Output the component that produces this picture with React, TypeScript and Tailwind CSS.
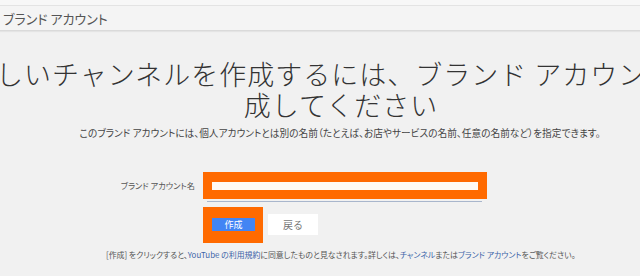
import React from "react";

const jp = "font-['Noto_Sans_CJK_JP','Noto_Sans',sans-serif]";
const palt = "[font-feature-settings:'palt']";

export default function App() {
  return (
    <div className={`w-[640px] h-[276px] overflow-hidden bg-[#f1f1f1] ${jp}`}>
      <div className="h-[6px] bg-[#f7f7f7] border-b border-[#e3e3e3]" />
      <div className={`h-[25px] bg-[#f4f4f4] border-b border-[#dadada] shadow-[0_1px_1px_rgba(0,0,0,0.05)] flex items-center px-[3px] ${palt}`}>
        <span className="text-[13px] text-[#555] leading-none">ブランド アカウント</span>
      </div>
      <div className="mt-[27px] text-[27px] leading-[31px] font-light text-[#333] whitespace-nowrap tracking-[1px]">
        <div className="w-[760px] ml-[-32px] text-center">
          新しいチャンネルを作成するには、ブランド アカウントを作
        </div>
        <div className="w-[760px] ml-[-39px] text-center">成してください</div>
      </div>
      <div className={`w-[760px] ml-[-40px] mt-[6px] text-center text-[9.7px] leading-[14px] text-[#444] whitespace-nowrap ${palt}`}>
        このブランド アカウントには、個人アカウントとは別の名前（たとえば、お店やサービスの名前、任意の名前など）を指定できます。
      </div>
      <div className="mt-[32px] flex items-start">
        <div className={`w-[196px] pr-[1px] h-[27px] flex items-center justify-end text-[8.2px] text-[#555] ${palt}`}>
          ブランド アカウント名
        </div>
        <div className="ml-[7px] flex flex-col">
          <div className="w-[284px] h-[27px] bg-[#ff6a00] flex items-center pl-[9px] pr-[9px]">
            <div className="w-full h-[8px] bg-[#fffaf3]" />
          </div>
          <div className="mt-[2px] ml-[4px] w-[275px] h-[1px] bg-[#a9b6cc]" />
          <div className="mt-[5px] flex items-start">
            <div className="w-[60px] h-[36px] bg-[#ff6a00] pl-[9px] pt-[11px]">
              <div className="w-[43px] h-[13px] bg-[#4285f4] flex items-center justify-center text-[9px] text-white leading-none">
                作成
              </div>
            </div>
            <div className="ml-[5px] mt-[7px] w-[50px] h-[21px] bg-white flex items-center justify-center text-[10px] text-[#777]">
              戻る
            </div>
          </div>
        </div>
      </div>
      <div className={`mt-[6px] pl-[106px] text-[7.9px] leading-[12px] text-[#555] whitespace-nowrap ${palt}`}>
        [作成] をクリックすると、<span className="text-[#3b64a8]">YouTube の利用規約</span>に同意したものと見なされます。詳しくは、
        <span className="text-[#3b64a8]">チャンネル</span>または<span className="text-[#3b64a8]">ブランド アカウント</span>をご覧ください。
      </div>
    </div>
  );
}
